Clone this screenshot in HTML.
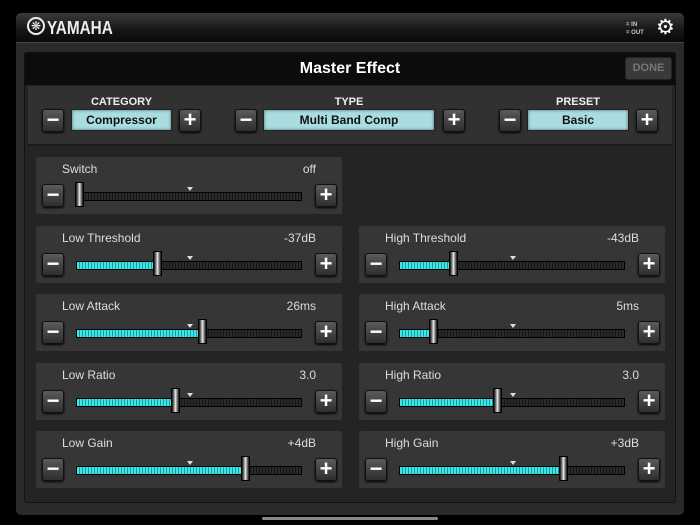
<!DOCTYPE html>
<html><head><meta charset="utf-8"><style>
*{margin:0;padding:0;box-sizing:border-box}
body{width:700px;height:525px;background:#000;position:relative;overflow:hidden;font-family:"Liberation Sans",sans-serif}
.abs{position:absolute}
#frame{left:16px;top:13px;width:668px;height:502px;background:#2a2a2a;border-radius:5px}
#hdr{left:16px;top:13px;width:668px;height:30px;background:linear-gradient(#3a3a3a,#151515 60%,#0a0a0a);border-radius:5px 5px 0 0;border-bottom:1px solid #444}
#inner{left:24px;top:52px;width:652px;height:451px;background:#242424;border:1px solid #111;border-radius:3px}
#title{left:25px;top:53px;width:650px;height:32px;background:#0c0c0c}
#sel{left:28px;top:86px;width:644px;height:60px;background:#313131;border-bottom:2px solid #1a1a1a}
.btn{width:22px;height:23px;border-radius:3px;background:linear-gradient(#5a5a5a,#2e2e2e);border:1px solid #111;box-shadow:0 1px 2px #000;color:#fff;font-weight:bold;font-size:22px;line-height:20px;text-align:center}
.disp{height:22px;background:#a9dde0;border:1px solid #222;box-shadow:inset 0 0 3px #567;color:#111;font-weight:bold;font-size:12px;line-height:20px;text-align:center}
.cap{color:#eee;font-weight:bold;font-size:11px;text-align:center}
.blk{width:306px;height:57px;background:#363636;border-radius:2px}
.lbl{position:absolute;left:26px;top:5px;color:#ddd;font-size:12px}
.val{position:absolute;right:26px;top:5px;color:#ddd;font-size:12px}
.trk{position:absolute;left:40px;top:35px;width:226px;height:9px;background:repeating-linear-gradient(90deg,#2a2a2a 0 2px,#151515 2px 3px);border:1px solid #000}
.fill{position:absolute;left:0;top:0;height:7px;background:repeating-linear-gradient(90deg,#3ee8e8 0 2px,#1a9a9a 2px 3px)}
.th{position:absolute;top:25px;width:9px;height:25px;background:linear-gradient(90deg,#111,#888 30%,#eee 50%,#888 70%,#111);border:1px solid #000;border-radius:1px}
.mk{position:absolute;left:151px;top:30px;width:0;height:0;border-left:3px solid transparent;border-right:3px solid transparent;border-top:4px solid #ddd}
.blk .btn{position:absolute;top:27px}
</style></head><body>
<div id="frame" class="abs"></div>
<div id="hdr" class="abs"></div>
<div class="abs" style="left:27px;top:17px;width:18px;height:18px;border:2px solid #eee;border-radius:50%;color:#eee;font-size:12px;line-height:14px;text-align:center">&#10059;</div>
<div class="abs" style="left:47px;top:18px;color:#eee;font-weight:bold;font-size:18px;transform:scaleX(0.85);transform-origin:left;letter-spacing:0">YAMAHA</div>
<div class="abs" style="left:626px;top:21px;color:#ccc;font-size:6px;line-height:8px;font-weight:bold">= IN<br>= OUT</div>
<div class="abs" style="left:656px;top:16px;color:#fff;font-size:21px;line-height:24px">&#9881;&#xFE0E;</div>
<div id="inner" class="abs"></div>
<div id="title" class="abs"></div>
<div class="abs" style="left:25px;top:60px;width:650px;text-align:center;color:#fff;font-weight:bold;font-size:16px">Master Effect</div>
<div class="abs" style="left:625px;top:57px;width:47px;height:23px;background:#3a3a3a;border-radius:3px;border:1px solid #222;color:#777;font-weight:bold;font-size:11px;text-align:center;line-height:21px">DONE</div>
<div id="sel" class="abs"></div>
<div class="abs cap" style="left:71px;top:96px;width:101px">CATEGORY</div>
<div class="abs btn" style="left:42px;top:109px">&minus;</div>
<div class="abs disp" style="left:71px;top:109px;width:101px">Compressor</div>
<div class="abs btn" style="left:179px;top:109px">+</div>
<div class="abs cap" style="left:263px;top:96px;width:172px">TYPE</div>
<div class="abs btn" style="left:235px;top:109px">&minus;</div>
<div class="abs disp" style="left:263px;top:109px;width:172px">Multi Band Comp</div>
<div class="abs btn" style="left:443px;top:109px">+</div>
<div class="abs cap" style="left:527px;top:96px;width:102px">PRESET</div>
<div class="abs btn" style="left:499px;top:109px">&minus;</div>
<div class="abs disp" style="left:527px;top:109px;width:102px">Basic</div>
<div class="abs btn" style="left:636px;top:109px">+</div>

<div class="abs blk" style="left:36px;top:157px"><span class="lbl">Switch</span><span class="val">off</span><div class="btn" style="left:6px">&minus;</div><div class="trk"></div><div class="mk"></div><div class="th" style="left:39px"></div><div class="btn" style="left:279px">+</div></div>

<div class="abs blk" style="left:36px;top:226px"><span class="lbl">Low Threshold</span><span class="val">-37dB</span><div class="btn" style="left:6px">&minus;</div><div class="trk"><div class="fill" style="width:81px"></div></div><div class="mk"></div><div class="th" style="left:117px"></div><div class="btn" style="left:279px">+</div></div>
<div class="abs blk" style="left:359px;top:226px"><span class="lbl">High Threshold</span><span class="val">-43dB</span><div class="btn" style="left:6px">&minus;</div><div class="trk"><div class="fill" style="width:54px"></div></div><div class="mk"></div><div class="th" style="left:90px"></div><div class="btn" style="left:279px">+</div></div>

<div class="abs blk" style="left:36px;top:294px"><span class="lbl">Low Attack</span><span class="val">26ms</span><div class="btn" style="left:6px">&minus;</div><div class="trk"><div class="fill" style="width:126px"></div></div><div class="mk"></div><div class="th" style="left:162px"></div><div class="btn" style="left:279px">+</div></div>
<div class="abs blk" style="left:359px;top:294px"><span class="lbl">High Attack</span><span class="val">5ms</span><div class="btn" style="left:6px">&minus;</div><div class="trk"><div class="fill" style="width:34px"></div></div><div class="mk"></div><div class="th" style="left:70px"></div><div class="btn" style="left:279px">+</div></div>

<div class="abs blk" style="left:36px;top:363px"><span class="lbl">Low Ratio</span><span class="val">3.0</span><div class="btn" style="left:6px">&minus;</div><div class="trk"><div class="fill" style="width:99px"></div></div><div class="mk"></div><div class="th" style="left:135px"></div><div class="btn" style="left:279px">+</div></div>
<div class="abs blk" style="left:359px;top:363px"><span class="lbl">High Ratio</span><span class="val">3.0</span><div class="btn" style="left:6px">&minus;</div><div class="trk"><div class="fill" style="width:98px"></div></div><div class="mk"></div><div class="th" style="left:134px"></div><div class="btn" style="left:279px">+</div></div>

<div class="abs blk" style="left:36px;top:431px"><span class="lbl">Low Gain</span><span class="val">+4dB</span><div class="btn" style="left:6px">&minus;</div><div class="trk"><div class="fill" style="width:169px"></div></div><div class="mk"></div><div class="th" style="left:205px"></div><div class="btn" style="left:279px">+</div></div>
<div class="abs blk" style="left:359px;top:431px"><span class="lbl">High Gain</span><span class="val">+3dB</span><div class="btn" style="left:6px">&minus;</div><div class="trk"><div class="fill" style="width:164px"></div></div><div class="mk"></div><div class="th" style="left:200px"></div><div class="btn" style="left:279px">+</div></div>

<div class="abs" style="left:262px;top:517px;width:176px;height:3px;background:#888;border-radius:2px"></div>
</body></html>
